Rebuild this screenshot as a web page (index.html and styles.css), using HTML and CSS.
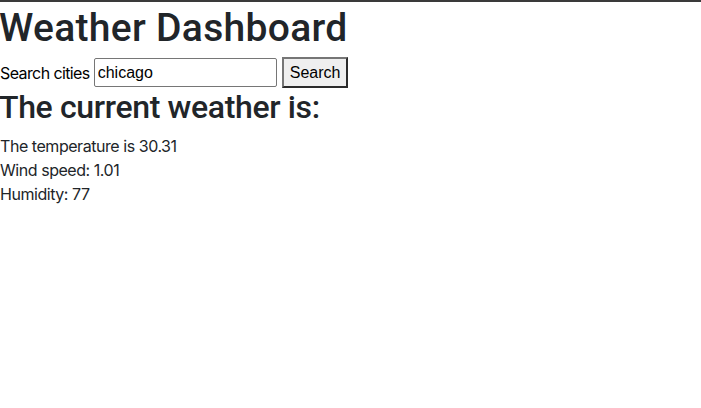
FILE: index.html
```html
<!DOCTYPE html>
<html lang="en">
<head>
<meta charset="utf-8">
<title>Weather Dashboard</title>
<link rel="stylesheet" href="styles.css">
</head>
<body>
<header class="topline"></header>
<main class="page">
  <h1 class="title">Weather Dashboard</h1>
  <form class="search">
    <label class="search-label" for="city">Search cities</label>
    <input class="search-input" id="city" type="text" value="chicago">
    <button class="search-btn" type="button">Search</button>
  </form>
  <h2 class="subtitle">The current weather is:</h2>
  <p class="stat">The temperature is 30.31</p>
  <p class="stat">Wind speed: 1.01</p>
  <p class="stat">Humidity: 77</p>
</main>
</body>
</html>
```
FILE: styles.css
```css
html, body {
  margin: 0;
  padding: 0;
  background: #fff;
}
body {
  font-family: Inter, "Noto Sans", sans-serif;
  font-size: 16px;
  line-height: 24px;
  color: #212529;
  letter-spacing: -0.45px;
}
.topline {
  height: 2px;
  background: #3a3a3a;
}
.title {
  margin: 2px 0 5px -1px;
  font-family: Roboto, Inter, sans-serif;
  font-size: 39px;
  font-weight: 500;
  line-height: 48px;
  letter-spacing: 0.3px;
}
.search {
  display: flex;
  align-items: center;
  height: 31px;
}
.search-label {
  color: #000;
  margin-right: 4px;
  letter-spacing: -0.6px;
}
.search-input {
  box-sizing: border-box;
  width: 183px;
  height: 29px;
  margin: 0 5px 0 0;
  padding: 1px 3px;
  border: 1px solid #767676;
  border-radius: 2px;
  font-family: "Liberation Sans", Arial, sans-serif;
  font-size: 16px;
  letter-spacing: 0;
  color: #000;
}
.search-btn {
  box-sizing: border-box;
  height: 31px;
  width: 66px;
  margin: 0;
  padding: 0 6px;
  border: 2px solid;
  border-color: #767676 #2b2b2b #2b2b2b #767676;
  background: #efefef;
  font-family: "Liberation Sans", Arial, sans-serif;
  font-size: 16px;
  letter-spacing: 0;
  color: #000;
}
.subtitle {
  margin: 0 0 8px -1px;
  font-family: Roboto, Inter, sans-serif;
  font-size: 32px;
  font-weight: 500;
  line-height: 38px;
  letter-spacing: -0.35px;
}
.stat {
  margin: 0;
  line-height: 24px;
}
```
